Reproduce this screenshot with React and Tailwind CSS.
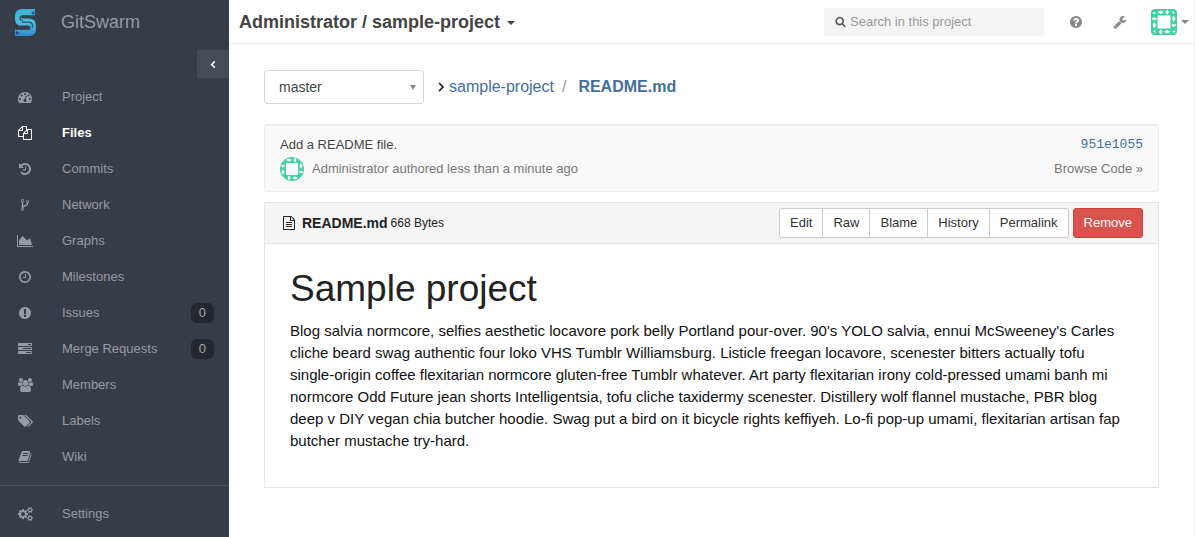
import React from "react";

const GLYPHS = {
  dashboard: [1792, "M384 1152q0-53-37.5-90.5t-90.5-37.5-90.5 37.5-37.5 90.5 37.5 90.5 90.5 37.5 90.5-37.5 37.5-90.5zm192-448q0-53-37.5-90.5t-90.5-37.5-90.5 37.5-37.5 90.5 37.5 90.5 90.5 37.5 90.5-37.5 37.5-90.5zm428 481l101-382q6-26-7.5-48.5t-38.5-29.5-48 6.5-30 39.5l-101 382q-60 5-107 43.5t-63 98.5q-20 77 20 146t117 89 146-20 89-117q16-60-6-117t-72-91zm660-33q0-53-37.5-90.5t-90.5-37.5-90.5 37.5-37.5 90.5 37.5 90.5 90.5 37.5 90.5-37.5 37.5-90.5zm-640-640q0-53-37.5-90.5t-90.5-37.5-90.5 37.5-37.5 90.5 37.5 90.5 90.5 37.5 90.5-37.5 37.5-90.5zm448 192q0-53-37.5-90.5t-90.5-37.5-90.5 37.5-37.5 90.5 37.5 90.5 90.5 37.5 90.5-37.5 37.5-90.5zm320 448q0 261-141 483-19 29-54 29h-1402q-35 0-54-29-141-221-141-483 0-182 71-348t191-286 286-191 348-71 348 71 286 191 191 286 71 348z"],
  files: [1792, "M1696 384q40 0 68 28t28 68v1216q0 40-28 68t-68 28h-960q-40 0-68-28t-28-68v-288h-544q-40 0-68-28t-28-68v-672q0-40 20-88t48-76l408-408q28-28 76-48t88-20h416q40 0 68 28t28 68v328q68-40 128-40h416zm-544 213l-299 299h299v-299zm-640-384l-299 299h299v-299zm196 647l316-316v-416h-384v416q0 40-28 68t-68 28h-416v640h512v-256q0-40 20-88t48-76zm956 804v-1152h-384v416q0 40-28 68t-68 28h-416v640h896z"],
  history: [1792, "M1664 896q0 156-61 298t-164 245-245 164-298 61q-172 0-327-72.5t-264-204.5q-7-10-6.5-22.5t8.5-20.5l137-138q10-9 25-9 16 2 23 12 73 95 179 147t225 52q104 0 198.5-40.5t163.5-109.5 109.5-163.5 40.5-198.5-40.5-198.5-109.5-163.5-163.5-109.5-198.5-40.5q-98 0-188 35.5t-160 101.5l137 138q31 30 14 69-17 40-59 40h-448q-26 0-45-19t-19-45v-448q0-42 40-59 39-17 69 14l130 129q107-101 244.5-156.5t284.5-55.5q156 0 298 61t245 164 164 245 61 298zm-640-288v448q0 14-9 23t-23 9h-320q-14 0-23-9t-9-23v-64q0-14 9-23t23-9h224v-352q0-14 9-23t23-9h64q14 0 23 9t9 23z"],
  fork: [1792, "M672 1472q0-40-28-68t-68-28-68 28-28 68 28 68 68 28 68-28 28-68zm0-1152q0-40-28-68t-68-28-68 28-28 68 28 68 68 28 68-28 28-68zm640 128q0-40-28-68t-68-28-68 28-28 68 28 68 68 28 68-28 28-68zm96 0q0 52-26 96.5t-70 69.5q-2 287-226 414-67 38-203 81-128 40-169.5 71t-41.5 100v26q44 25 70 69.5t26 96.5q0 80-56 136t-136 56-136-56-56-136q0-52 26-96.5t70-69.5v-820q-44-25-70-69.5t-26-96.5q0-80 56-136t136-56 136 56 56 136q0 52-26 96.5t-70 69.5v497q54-26 154-57 55-17 87.5-29.5t70.5-31 59-39.5 40.5-51 28-69.5 8.5-91.5q-44-25-70-69.5t-26-96.5q0-80 56-136t136-56 136 56 56 136z"],
  area: [2048, "M2048 1536v128h-2048v-1536h128v1408h1920zm-384-1024l256 896h-1664v-576l448-576 576 576z"],
  clock: [1792, "M1024 544v448q0 14-9 23t-23 9h-320q-14 0-23-9t-9-23v-64q0-14 9-23t23-9h224v-352q0-14 9-23t23-9h64q14 0 23 9t9 23zm416 352q0-148-73-273t-198-198-273-73-273 73-198 198-73 273 73 273 198 198 273 73 273-73 198-198 73-273zm224 0q0 209-103 385.5t-279.5 279.5-385.5 103-385.5-103-279.5-279.5-103-385.5 103-385.5 279.5-279.5 385.5-103 385.5 103 279.5 279.5 103 385.5z"],
  alert: [1792, "M896 128q209 0 385.5 103t279.5 279.5 103 385.5-103 385.5-279.5 279.5-385.5 103-385.5-103-279.5-279.5-103-385.5 103-385.5 279.5-279.5 385.5-103zm128 1247v-190q0-14-9-23.5t-22-9.5h-192q-13 0-23 10t-10 23v190q0 13 10 23t23 10h192q13 0 22-9.5t9-23.5zm-2-344l18-621q0-12-10-18-10-8-24-8h-220q-14 0-24 8-10 6-10 18l17 621q0 10 10 17.5t24 7.5h185q14 0 23.5-7.5t10.5-17.5z"],
  tasks: [1792, "M1024 1408h640v-128h-640v128zm-384-512h1024v-128h-1024v128zm640-512h384v-128h-384v128zm512 832v256q0 26-19 45t-45 19h-1664q-26 0-45-19t-19-45v-256q0-26 19-45t45-19h1664q26 0 45 19t19 45zm0-512v256q0 26-19 45t-45 19h-1664q-26 0-45-19t-19-45v-256q0-26 19-45t45-19h1664q26 0 45 19t19 45zm0-512v256q0 26-19 45t-45 19h-1664q-26 0-45-19t-19-45v-256q0-26 19-45t45-19h1664q26 0 45 19t19 45z"],
  users: [1920, "M593 896q-162 5-265 128h-134q-82 0-138-40.5t-56-118.5q0-353 124-353 6 0 43.5 21t97.5 42.5 119 21.5q67 0 133-23-5 37-5 66 0 139 81 256zm1071 637q0 120-73 189.5t-194 69.5h-874q-121 0-194-69.5t-73-189.5q0-53 3.5-103.5t14-109 26.5-108.5 43-97.5 62-81 85.5-53.5 111.5-20q10 0 43 21.5t73 48 107 48 135 21.5 135-21.5 107-48 73-48 43-21.5q61 0 111.5 20t85.5 53.5 62 81 43 97.5 26.5 108.5 14 109 3.5 103.5zm-1024-1277q0 106-75 181t-181 75-181-75-75-181 75-181 181-75 181 75 75 181zm704 384q0 159-112.5 271.5t-271.5 112.5-271.5-112.5-112.5-271.5 112.5-271.5 271.5-112.5 271.5 112.5 112.5 271.5zm576 225q0 78-56 118.5t-138 40.5h-134q-103-123-265-128 81-117 81-256 0-29-5-66 66 23 133 23 59 0 119-21.5t97.5-42.5 43.5-21q124 0 124 353zm-128-609q0 106-75 181t-181 75-181-75-75-181 75-181 181-75 181 75 75 181z"],
  tags: [1920, "M448 448q0-53-37.5-90.5t-90.5-37.5-90.5 37.5-37.5 90.5 37.5 90.5 90.5 37.5 90.5-37.5 37.5-90.5zm1067 576q0 53-37 90l-491 492q-39 37-91 37-53 0-90-37l-715-716q-38-37-64.5-101t-26.5-117v-416q0-52 38-90t90-38h416q53 0 117 26.5t102 64.5l715 714q37 39 37 91zm384 0q0 53-37 90l-491 492q-39 37-91 37-36 0-59-14t-53-45l470-470q37-37 37-90 0-52-37-91l-715-714q-38-38-102-64.5t-117-26.5h224q53 0 117 26.5t102 64.5l715 714q37 39 37 91z"],
  book: [1792, "M1703 478q40 57 18 129l-275 906q-19 64-76.5 107.5t-122.5 43.5h-923q-77 0-148.5-53.5t-99.5-131.5q-24-67-2-127 0-4 3-27t4-37q1-8-3-21.5t-3-19.5q2-11 8-21t16.5-23.5 16.5-23.5q23-38 45-91.5t30-91.5q3-10 .5-30t-.5-28q3-11 17-28t17-23q21-36 42-92t25-90q1-9-2.5-32t.5-28q4-13 22-30.5t22-22.5q19-26 42.5-84.5t27.5-96.5q1-8-3-25.5t-2-26.5q2-8 9-18t18-23 17-21q8-12 16.5-30.5t15-35 16-36 19.5-32 26.5-23.5 36-11.5 47.5 5.5l-1 3q38-9 51-9h761q74 0 114 56t18 130l-274 906q-36 119-71.5 153.5t-128.5 34.5h-869q-27 0-38 15-11 16-1 43 24 70 144 70h923q29 0 56-15.5t35-41.5l300-987q7-22 5-57 38 15 59 43zm-1064 2q-4 13 2 22.5t20 9.5h608q13 0 25.5-9.5t16.5-22.5l21-64q4-13-2-22.5t-20-9.5h-608q-13 0-25.5 9.5t-16.5 22.5zm-83 256q-4 13 2 22.5t20 9.5h608q13 0 25.5-9.5t16.5-22.5l21-64q4-13-2-22.5t-20-9.5h-608q-13 0-25.5 9.5t-16.5 22.5z"],
  cogs: [1920, "M896 896q0-106-75-181t-181-75-181 75-75 181 75 181 181 75 181-75 75-181zm768 512q0-52-38-90t-90-38-90 38-38 90q0 53 37.5 90.5t90.5 37.5 90.5-37.5 37.5-90.5zm0-1024q0-52-38-90t-90-38-90 38-38 90q0 53 37.5 90.5t90.5 37.5 90.5-37.5 37.5-90.5zm-384 421v185q0 10-7 19.5t-16 10.5l-155 24q-11 35-32 76 34 48 90 115 7 11 7 20 0 12-7 19-23 30-82.5 89.5t-78.5 59.5q-11 0-21-7l-115-90q-37 19-77 31-11 108-23 155-7 24-30 24h-186q-11 0-20-7.5t-10-17.5l-23-153q-34-10-75-31l-118 89q-7 7-20 7-11 0-21-8-144-133-144-160 0-9 7-19 10-14 41-53t47-61q-23-44-35-82l-152-24q-10-1-17-9.5t-7-19.5v-185q0-10 7-19.5t16-10.5l155-24q11-35 32-76-34-48-90-115-7-11-7-20 0-12 7-20 22-30 82-89t79-59q11 0 21 7l115 90q34-18 77-32 11-108 23-154 7-24 30-24h186q11 0 20 7.5t10 17.5l23 153q34 10 75 31l118-89q8-7 20-7 11 0 21 8 144 133 144 160 0 8-7 19-12 16-42 54t-45 60q23 48 34 82l152 23q10 2 17 10.5t7 19.5zm640 533v140q0 16-149 31-12 27-30 52 51 113 51 138 0 4-4 7-122 71-124 71-8 0-46-47t-52-68q-20 2-30 2t-30-2q-14 21-52 68t-46 47q-2 0-124-71-4-3-4-7 0-25 51-138-18-25-30-52-149-15-149-31v-140q0-16 149-31 13-29 30-52-51-113-51-138 0-4 4-7 4-2 35-20t59-34 30-16q8 0 46 46.5t52 67.5q20-2 30-2t30 2q51-71 92-112l6-2q4 0 124 70 4 3 4 7 0 25-51 138 17 23 30 52 149 15 149 31zm0-1024v140q0 16-149 31-12 27-30 52 51 113 51 138 0 4-4 7-122 71-124 71-8 0-46-47t-52-68q-20 2-30 2t-30-2q-14 21-52 68t-46 47q-2 0-124-71-4-3-4-7 0-25 51-138-18-25-30-52-149-15-149-31v-140q0-16 149-31 13-29 30-52-51-113-51-138 0-4 4-7 4-2 35-20t59-34 30-16q8 0 46 46.5t52 67.5q20-2 30-2t30 2q51-71 92-112l6-2q4 0 124 70 4 3 4 7 0 25-51 138 17 23 30 52 149 15 149 31z"],
  search: [1792, "M1216 832q0-185-131.5-316.5t-316.5-131.5-316.5 131.5-131.5 316.5 131.5 316.5 316.5 131.5 316.5-131.5 131.5-316.5zm512 832q0 52-38 90t-90 38q-54 0-90-38l-343-342q-179 124-399 124-143 0-273.5-55.5t-225-150-150-225-55.5-273.5 55.5-273.5 150-225 225-150 273.5-55.5 273.5 55.5 225 150 150 225 55.5 273.5q0 220-124 399l343 343q37 37 37 90z"],
  question: [1792, "M1024 1376v-192q0-14-9-23t-23-9h-192q-14 0-23 9t-9 23v192q0 14 9 23t23 9h192q14 0 23-9t9-23zm256-672q0-88-55.5-163t-138.5-116-170-41q-243 0-371 213-15 24 8 42l132 100q7 6 19 6 16 0 25-12 53-68 86-92 34-24 86-24 48 0 85.5 26t37.5 59q0 38-20 61t-68 45q-63 28-115.5 86.5t-52.5 125.5v36q0 14 9 23t23 9h192q14 0 23-9t9-23q0-19 21.5-49.5t54.5-49.5q32-18 49-28.5t46-35 44.5-48 28-60.5 12.5-81zm384 192q0 209-103 385.5t-279.5 279.5-385.5 103-385.5-103-279.5-279.5-103-385.5 103-385.5 279.5-279.5 385.5-103 385.5 103 279.5 279.5 103 385.5z"],
  wrench: [1792, "M448 1472q0-26-19-45t-45-19-45 19-19 45 19 45 45 19 45-19 19-45zm644-420l-682 682q-37 37-90 37-52 0-91-37l-106-108q-38-36-38-90 0-53 38-91l681-681q39 98 114.5 173.5t173.5 114.5zm634-435q0 39-23 106-47 134-164.5 217.5t-258.5 83.5q-185 0-316.5-131.5t-131.5-316.5 131.5-316.5 316.5-131.5q58 0 121.5 16.5t107.5 46.5q16 11 16 28t-16 28l-293 169v224l193 107q5-3 79-48.5t135.5-81 70.5-35.5q15 0 23.5 10t8.5 25z"],
  doc: [1792, "M1596 380q28 28 48 76t20 88v1152q0 40-28 68t-68 28h-1344q-40 0-68-28t-28-68v-1600q0-40 28-68t68-28h896q40 0 88 20t76 48zm-444-244v376h376q-10-29-22-41l-313-313q-12-12-41-22zm384 1528v-1024h-416q-40 0-68-28t-28-68v-416h-768v1536h1280zm-1024-864q0-14 9-23t23-9h704q14 0 23 9t9 23v64q0 14-9 23t-23 9h-704q-14 0-23-9t-9-23v-64zm736 224q14 0 23 9t9 23v64q0 14-9 23t-23 9h-704q-14 0-23-9t-9-23v-64q0-14 9-23t23-9h704zm0 256q14 0 23 9t9 23v64q0 14-9 23t-23 9h-704q-14 0-23-9t-9-23v-64q0-14 9-23t23-9h704z"],
};

function Icon({ name, className = "h-[14px]" }) {
  const [width, path] = GLYPHS[name];
  return (
    <svg viewBox={`0 0 ${width} 1792`} className={`w-auto shrink-0 ${className}`} fill="currentColor" aria-hidden="true">
      <path d={path} />
    </svg>
  );
}

function Chevron({ left = false, className }) {
  return (
    <svg viewBox="0 0 6 10" className={className} fill="none" stroke="currentColor" strokeWidth="1.7" aria-hidden="true">
      <path d={left ? "M5 1.5 1.5 5 5 8.5" : "M1 1l4 4-4 4"} />
    </svg>
  );
}

function Caret({ className = "" }) {
  return (
    <svg viewBox="0 0 8 4" className={`h-1 w-2 shrink-0 ${className}`} fill="currentColor" aria-hidden="true">
      <path d="M0 0h8L4 4z" />
    </svg>
  );
}

function Logo() {
  return (
    <svg viewBox="0 0 21 27" className="h-[27px] w-[21px]" fill="none" aria-hidden="true">
      <defs>
        <linearGradient id="ribbon" x1="0" y1="0" x2="0" y2="27" gradientUnits="userSpaceOnUse">
          <stop offset="0" stopColor="#3fb0d6" />
          <stop offset="0.5" stopColor="#4abfe0" />
          <stop offset="1" stopColor="#2f8bc9" />
        </linearGradient>
      </defs>
      <path
        d="M7 0H20V6.500H8.500Q6.500 6.500 6.500 8.200T8.500 9.500H14Q21 9.500 21 16.500V20Q21 27 14 27H0V20.500H12.500Q14.500 20.500 14.500 18.500T12.500 17H7Q0 17 0 10V7Q0 0 7 0Z"
        fill="url(#ribbon)"
      />
      <path d="M19 6.800H7.500Q5 6.800 5 9.300 5 11.500 7.500 11.500M7 13.200H13.500Q17.500 13.200 17.500 17V18.500M6 17H13Q15 17 15 18.700T13 20.400H1" stroke="#37485a" strokeWidth="1.2" />
      <path d="M16 3.800 19.300 2v4zM1 21.500 4.500 24 1 26z" fill="#174a9c" />
    </svg>
  );
}

function Identicon({ className }) {
  return (
    <svg viewBox="0 0 26 26" className={`shrink-0 ${className}`} aria-hidden="true">
      <path d="M0 0h26v26H0z" fill="#42cfa5" />
      <path d="M6.500 6.500h13v13h-13z" fill="#fff" />
      <g fill="#fff">
        <path d="M6.500 3.300 9.700 1.500 13 3.300 9.700 5zM16.200 0.500 18 3.300 16.200 6 14.500 3.300zM22.700 6.500 24.500 9.700 22.700 13 21 9.700zM20 16.200 22.700 14.500 25.500 16.200 22.700 18zM13 22.700 16.200 21 19.500 22.700 16.200 24.500zM8 22.700 9.700 20 11.500 22.700 9.700 25.500zM1.500 16.200 3.300 13 5 16.200 3.300 19.500zM0.500 9.700 3.300 8 6 9.700 3.300 11.500z" />
        <path d="M1.500 5 3 2.500 5 4.500zM21 2 24 3.500 22 5zM24.500 21.500 23 24 21 22zM5 24 2 22.500 4 21z" />
      </g>
    </svg>
  );
}

const NAV = [
  ["dashboard", "Project"],
  ["files", "Files"],
  ["history", "Commits"],
  ["fork", "Network"],
  ["area", "Graphs"],
  ["clock", "Milestones"],
  ["alert", "Issues", 0],
  ["tasks", "Merge Requests", 0],
  ["users", "Members"],
  ["tags", "Labels"],
  ["book", "Wiki"],
];

function NavItem({ icon, label, count }) {
  const active = label === "Files";
  return (
    <li>
      <a
        href="#"
        aria-current={active ? "page" : undefined}
        className={`flex h-9 items-center pr-[15px] pl-[14px] text-[13px] ${active ? "font-bold text-white" : "text-[#979ba3]"}`}
      >
        <span className="mr-[26px] flex w-[22px] justify-center">
          <Icon name={icon} />
        </span>
        <span className="grow">{label}</span>
        {count !== undefined && (
          <span className="rounded-md bg-[#24272d] px-2 leading-5 text-[#a5a9b0]">{count}</span>
        )}
      </a>
    </li>
  );
}

function Sidebar() {
  return (
    <aside className="w-[229px] shrink-0 bg-[#373d47]">
      <a href="#" className="flex h-[50px] items-start pl-[15px] text-lg leading-[44px] text-[#979ba3]">
        <span className="mr-[25px] pt-[9px]">
          <Logo />
        </span>
        GitSwarm
      </a>
      <div className="mb-px flex justify-end">
        <button type="button" aria-label="Collapse sidebar" className="flex h-7 w-8 items-center justify-center bg-[#464c56] text-white">
          <Chevron left className="h-[9px] w-[6px]" />
        </button>
      </div>
      <nav aria-label="Project">
        <ul>
          {NAV.map(([icon, label, count]) => (
            <NavItem key={label} icon={icon} label={label} count={count} />
          ))}
        </ul>
        <ul className="mt-[10px] border-t border-[#4b515b] pt-[10px]">
          <NavItem icon="cogs" label="Settings" />
        </ul>
      </nav>
    </aside>
  );
}

function Header() {
  return (
    <header className="flex h-11 items-center justify-between border-b border-[#eee] pr-[5px] pl-[10px]">
      <h1 className="text-lg font-bold text-[#444]">
        <button type="button" className="flex items-center gap-[7px]">
          Administrator / sample-project
          <Caret className="mt-[2px]" />
        </button>
      </h1>
      <div className="flex items-center text-[#888]">
        <label className="mr-[25px] flex h-7 w-[220px] items-center gap-1 rounded-[3px] bg-[#f4f4f4] pl-[11px] text-[#555]">
          <Icon name="search" className="h-[11px]" />
          <input
            type="search"
            aria-label="Search in this project"
            placeholder="Search in this project"
            className="min-w-0 grow bg-transparent text-[13px] outline-none placeholder:text-[#999]"
          />
        </label>
        <a href="#" aria-label="Help" className="mr-[30px]">
          <Icon name="question" />
        </a>
        <a href="#" aria-label="Admin area" className="mr-6">
          <Icon name="wrench" />
        </a>
        <button type="button" aria-label="Account menu" className="flex items-center gap-1">
          <Identicon className="size-[26px] rounded-[4px]" />
          <Caret />
        </button>
      </div>
    </header>
  );
}

function CommitBox() {
  return (
    <section className="mb-[10px] flex justify-between rounded-[3px] border border-t-2 border-[#eee] bg-[#f9f9f9] px-[15px] pt-[7px] pb-[10px] text-[13px] text-[#777]">
      <div>
        <a href="#" className="block leading-6 text-[#444]">Add a README file.</a>
        <div className="flex h-6 items-center gap-2">
          <Identicon className="size-6 rounded-full" />
          <span>Administrator authored less than a minute ago</span>
        </div>
      </div>
      <div className="text-right leading-6">
        <a href="#" className="block font-['Liberation_Mono',monospace] text-[#446e9b]">951e1055</a>
        <a href="#" className="block">Browse Code »</a>
      </div>
    </section>
  );
}

const ACTIONS = ["Edit", "Raw", "Blame", "History", "Permalink"];

function FileBox() {
  return (
    <article className="border border-[#e5e5e5]">
      <header className="flex h-[41px] items-center justify-between border-b border-[#e5e5e5] bg-[#f5f5f5] pr-[15px] pl-[17px] text-[#222]">
        <div className="flex items-center">
          <Icon name="doc" className="mr-[6px] h-[14px]" />
          <strong className="mr-[3px] text-sm">README.md</strong>
          <small className="text-xs">668 Bytes</small>
        </div>
        <div className="flex gap-1 text-[13px]">
          <div className="flex divide-x divide-[#ccc] overflow-hidden rounded-[3px] border border-[#ccc] bg-white text-[#333]">
            {ACTIONS.map((action) => (
              <button key={action} type="button" className="h-7 px-[10px]">
                {action}
              </button>
            ))}
          </div>
          <button type="button" className="h-[30px] rounded-[3px] border border-[#d43f3a] bg-[#d9534f] px-[10px] text-white">
            Remove
          </button>
        </div>
      </header>
      <div className="pt-6 pr-[30px] pb-[35px] pl-[25px] text-[#111]">
        <h2 className="mb-[10px] text-[37px] leading-[42px] text-[#222]">Sample project</h2>
        <p className="text-[15px] leading-[22px]">
          Blog salvia normcore, selfies aesthetic locavore pork belly Portland pour-over. 90's YOLO salvia, ennui
          McSweeney's Carles cliche beard swag authentic four loko VHS Tumblr Williamsburg. Listicle freegan locavore,
          scenester bitters actually tofu single-origin coffee flexitarian normcore gluten-free Tumblr whatever. Art
          party flexitarian irony cold-pressed umami banh mi normcore Odd Future jean shorts Intelligentsia, tofu
          cliche taxidermy scenester. Distillery wolf flannel mustache, PBR blog deep v DIY vegan chia butcher hoodie.
          Swag put a bird on it bicycle rights keffiyeh. Lo-fi pop-up umami, flexitarian artisan fap butcher mustache
          try-hard.
        </p>
      </div>
    </article>
  );
}

export default function App() {
  return (
    <div className="flex min-h-screen bg-white font-['Liberation_Sans',Arial,sans-serif]">
      <Sidebar />
      <div className="min-w-0 grow border-r border-[#eee]">
        <Header />
        <main className="px-[35px] pt-[26px]">
          <div className="mb-5 flex h-[34px] items-center">
            <div className="relative mr-[14px] w-40">
              <select aria-label="Branch" className="h-[34px] w-full appearance-none rounded-[3px] border border-[#d5d5d5] bg-white px-[14px] text-sm text-[#444]">
                <option>master</option>
              </select>
              <svg viewBox="0 0 6 5" className="pointer-events-none absolute top-[15px] right-2 h-[5px] w-[6px]" fill="#888" aria-hidden="true">
                <path d="M0 0h6L3 5z" />
              </svg>
            </div>
            <nav aria-label="Breadcrumb" className="flex items-center text-base text-[#446e9b]">
              <Chevron className="mr-[5px] h-[10px] w-[6px] text-[#222]" />
              <a href="#">sample-project</a>
              <span className="mr-3 ml-2 text-[#999]">/</span>
              <a href="#" className="font-bold">README.md</a>
            </nav>
          </div>
          <CommitBox />
          <FileBox />
        </main>
      </div>
    </div>
  );
}
